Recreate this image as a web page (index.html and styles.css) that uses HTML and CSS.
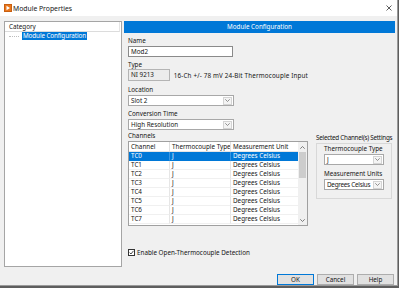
FILE: index.html
```html
<!DOCTYPE html>
<html>
<head>
<meta charset="utf-8">
<link rel="stylesheet" href="styles.css">
</head>
<body>
<div class="window">
  <div class="titlebar">
    <svg class="app-icon" width="8" height="8" viewBox="0 0 8 8"><rect x="0" y="0" width="8" height="8" fill="#e9761c"/><rect x="0.5" y="0.5" width="7" height="7" fill="none" stroke="#c85f10" stroke-width="1"/><polygon points="2.5,1.8 6,4 2.5,6.2" fill="#fff"/></svg>
    <span class="title">Module Properties</span>
    <svg class="close" width="6" height="6" viewBox="0 0 6 6"><path d="M0.5 0.5 L5.5 5.5 M5.5 0.5 L0.5 5.5" stroke="#333" stroke-width="0.8" fill="none"/></svg>
  </div>
  <div class="content">
    <div class="sidebar">
      <div class="side-head">Category</div>
      <div class="tree-item"><span class="dots"></span><span class="tree-sel">Module Configuration</span></div>
    </div>
    <div class="main">
      <div class="main-head">Module Configuration</div>
      <div class="form">
        <div class="cols">
          <div class="left-col">
            <div class="lbl lbl-first">Name</div>
            <div class="field">Mod2</div>
            <div class="lbl lbl-type">Type</div>
            <div class="type-row">
              <div class="type-box">NI 9213</div>
              <span class="desc">16-Ch +/- 78 mV 24-Bit Thermocouple Input</span>
            </div>
            <div class="lbl lbl-loc">Location</div>
            <div class="select"><span class="sel-text">Slot 2</span><span class="arrow"><svg width="5" height="3" viewBox="0 0 5 3"><path d="M0.3 0.3 L2.5 2.5 L4.7 0.3" stroke="#777" stroke-width="0.8" fill="none"/></svg></span></div>
            <div class="lbl lbl-conv">Conversion Time</div>
            <div class="select"><span class="sel-text">High Resolution</span><span class="arrow"><svg width="5" height="3" viewBox="0 0 5 3"><path d="M0.3 0.3 L2.5 2.5 L4.7 0.3" stroke="#777" stroke-width="0.8" fill="none"/></svg></span></div>
            <div class="lbl lbl-chan">Channels</div>
            <div class="table">
              <div class="grid">
                <div class="th">Channel</div><div class="th">Thermocouple Type</div><div class="th th-last">Measurement Unit</div>
                <div class="td sel">TC0</div><div class="td sel">J</div><div class="td sel td-last">Degrees Celsius</div>
                <div class="td">TC1</div><div class="td">J</div><div class="td td-last">Degrees Celsius</div>
                <div class="td">TC2</div><div class="td">J</div><div class="td td-last">Degrees Celsius</div>
                <div class="td">TC3</div><div class="td">J</div><div class="td td-last">Degrees Celsius</div>
                <div class="td">TC4</div><div class="td">J</div><div class="td td-last">Degrees Celsius</div>
                <div class="td">TC5</div><div class="td">J</div><div class="td td-last">Degrees Celsius</div>
                <div class="td">TC6</div><div class="td">J</div><div class="td td-last">Degrees Celsius</div>
                <div class="td">TC7</div><div class="td">J</div><div class="td td-last">Degrees Celsius</div>
              </div>
              <div class="scrollbar">
                <div class="sb-btn"><svg width="5" height="3" viewBox="0 0 5 3"><path d="M0.3 2.7 L2.5 0.5 L4.7 2.7" stroke="#606060" stroke-width="0.8" fill="none"/></svg></div>
                <div class="sb-thumb"></div>
                <div class="sb-space"></div>
                <div class="sb-btn"><svg width="5" height="3" viewBox="0 0 5 3"><path d="M0.3 0.3 L2.5 2.5 L4.7 0.3" stroke="#606060" stroke-width="0.8" fill="none"/></svg></div>
              </div>
            </div>
          </div>
          <div class="right-col">
            <div class="lbl group-lbl">Selected Channel(s) Settings</div>
            <div class="group">
              <div class="lbl">Thermocouple Type</div>
              <div class="select small"><span class="sel-text">J</span><span class="arrow"><svg width="5" height="3" viewBox="0 0 5 3"><path d="M0.3 0.3 L2.5 2.5 L4.7 0.3" stroke="#777" stroke-width="0.8" fill="none"/></svg></span></div>
              <div class="lbl lbl-units">Measurement Units</div>
              <div class="select small"><span class="sel-text tight">Degrees Celsius</span><span class="arrow"><svg width="5" height="3" viewBox="0 0 5 3"><path d="M0.3 0.3 L2.5 2.5 L4.7 0.3" stroke="#777" stroke-width="0.8" fill="none"/></svg></span></div>
            </div>
          </div>
        </div>
        <div class="check">
          <span class="box"><svg width="5" height="5" viewBox="0 0 5 5"><path d="M0.6 2.6 L2 4 L4.5 0.8" stroke="#222" stroke-width="0.8" fill="none"/></svg></span>
          <span>Enable Open-Thermocouple Detection</span>
        </div>
      </div>
    </div>
  </div>
  <div class="footer">
    <div class="btn btn-default">OK</div>
    <div class="btn">Cancel</div>
    <div class="btn">Help</div>
  </div>
</div>
</body>
</html>
```
FILE: styles.css
```css
* { box-sizing: border-box; margin: 0; padding: 0; }
html, body { width: 399px; height: 288px; overflow: hidden; }
body {
  background: #5e5e5e;
  font-family: "Noto Sans", "Segoe UI", sans-serif;
  font-size: 6.3px;
  color: #151515;
}
.window {
  width: 398px;
  height: 286px;
  background: #f0f0f0;
  border-right: 1px solid #9a9a9a;
  border-bottom: 1px solid #9a9a9a;
  display: flex;
  flex-direction: column;
}
.titlebar {
  height: 17px;
  background: #fff;
  display: flex;
  align-items: center;
  padding-left: 4px;
  padding-right: 5px;
}
.app-icon { display: block; }
.title { font-size: 6.8px; margin-left: 1px; }
.close { margin-left: auto; display: block; }

.content {
  display: flex;
  gap: 2px;
  padding: 5px 0 0 4px;
  height: 268px;
}
.sidebar {
  width: 118px;
  height: 246px;
  background: #fff;
  border: 1px solid #a5a5a5;
}
.side-head {
  height: 10px;
  line-height: 9px;
  padding-left: 4px;
  border-bottom: 1px solid #dcdcdc;
  border-right: 1px solid #e5e5e5;
  width: 115px;
}
.tree-item {
  display: flex;
  align-items: center;
  height: 8px;
}
.dots {
  width: 10px;
  margin-left: 4px;
  margin-right: 3px;
  border-top: 1px dotted #bdbdbd;
}
.tree-sel {
  background: #0078d7;
  color: #fff;
  padding: 0 1px;
  line-height: 8px;
  letter-spacing: -0.1px;
}
.main {
  width: 271px;
  display: flex;
  flex-direction: column;
}
.main-head {
  height: 12px;
  line-height: 12px;
  background: #0078d7;
  color: #fff;
  text-align: center;
}
.form {
  padding-left: 4px;
  display: flex;
  flex-direction: column;
}
.cols { display: flex; gap: 8px; }
.left-col { width: 180px; }
.lbl { height: 8px; line-height: 8px; white-space: nowrap; }
.lbl-first { margin-top: 4px; }
.lbl-type { margin-top: 4px; }
.lbl-loc { margin-top: 5px; }
.lbl-conv { margin-top: 4px; }
.lbl-chan { margin-top: 2px; }
.group-lbl { letter-spacing: -0.25px; }
.field {
  width: 105px;
  height: 11px;
  margin-top: 1px;
  border: 1px solid #8a8a8a;
  background: #fff;
  padding-left: 2px;
  line-height: 9px;
}
.type-row { display: flex; align-items: center; gap: 4px; }
.type-box {
  width: 61px;
  height: 12px;
  border: 1px solid #b4b4b4;
  background: #ececec;
  padding-left: 2px;
  line-height: 10px;
}
.desc { white-space: nowrap; letter-spacing: 0.15px; }
.select {
  width: 106px;
  height: 11px;
  margin-top: 1px;
  display: flex;
  align-items: center;
  border: 1px solid #a8a8a8;
  background: #fff;
  padding-left: 2px;
  padding-right: 1px;
}
.select.small { width: 60px; }
.sel-text { flex: 1; line-height: 9px; white-space: nowrap; }
.sel-text.tight { letter-spacing: -0.25px; overflow: hidden; }
.arrow {
  width: 9px;
  height: 8px;
  flex: none;
  border: 1px solid #d4d4d4;
  background: #f4f4f4;
  display: flex;
  align-items: center;
  justify-content: center;
}
.arrow svg, .sb-btn svg, .box svg { display: block; }
.table {
  width: 180px;
  height: 85px;
  margin-top: 1px;
  border: 1px solid #a0a0a0;
  background: #fff;
  display: flex;
}
.grid {
  flex: 1;
  display: grid;
  grid-template-columns: 41px 61px 1fr;
  grid-template-rows: 10px;
  grid-auto-rows: 9px;
  align-content: start;
}
.th {
  padding-left: 2px;
  line-height: 9px;
  border-right: 1px solid #e0e0e0;
  border-bottom: 1px solid #e5e5e5;
  white-space: nowrap;
  overflow: hidden;
}
.th-last { border-right: none; }
.td {
  padding-left: 2px;
  line-height: 8px;
  border-right: 1px solid #e6e6e6;
  border-bottom: 1px solid #f0f0f0;
  white-space: nowrap;
  color: #151515;
}
.td-last { border-right: none; }
.td.sel { background: #0078d7; color: #fff; border-bottom-color: #0078d7; border-right-color: #3a95e0; }
.td-last.sel { border-right: none; }
.scrollbar {
  width: 9px;
  background: #f0f0f0;
  display: flex;
  flex-direction: column;
}
.sb-btn {
  height: 10px;
  display: flex;
  align-items: center;
  justify-content: center;
}
.sb-thumb {
  height: 26px;
  margin: 0 1px;
  background: #cdcdcd;
}
.sb-space { flex: 1; }
.right-col { width: 76px; margin-top: 101px; }
.group {
  margin-top: 1px;
  height: 56px;
  border: 1px solid #d8d8d8;
  padding: 1px 7px 0 7px;
}
.lbl-units { margin-top: 5px; }
.check {
  margin-top: 22px;
  display: flex;
  align-items: center;
  gap: 2px;
  height: 8px;
}
.box {
  width: 7px;
  height: 7px;
  border: 1px solid #333;
  background: #fff;
  display: flex;
  align-items: center;
  justify-content: center;
}
.footer {
  display: flex;
  justify-content: flex-end;
  gap: 3px;
  padding: 1px 3px 0 0;
}
.btn {
  width: 37px;
  height: 11px;
  line-height: 9px;
  text-align: center;
  background: #e1e1e1;
  border: 1px solid #adadad;
}
.btn-default { border-color: #0078d7; }
```
